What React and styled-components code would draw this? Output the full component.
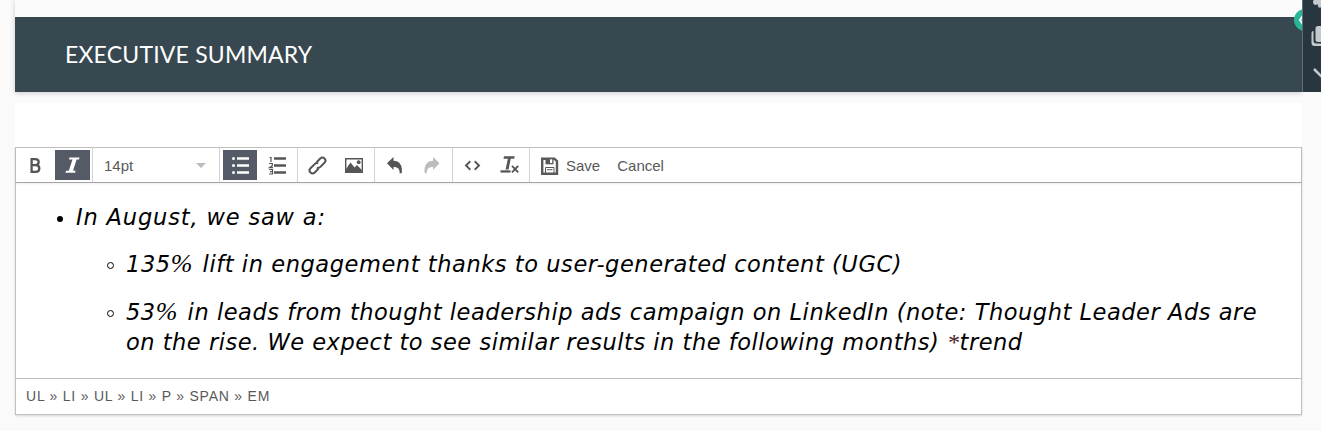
import React from "react";
import styled, { createGlobalStyle } from "styled-components";

const path = ["UL", "LI", "UL", "LI", "P", "SPAN", "EM"];

const BoldIcon = () => (
  <Icon>
    <path
      d="M5.600 4.100h3.600c2.500 0 3.500 1.200 3.500 2.900 0 1.900-1.100 3.100-3.500 3.100H5.600zM5.600 10.100h4c2.500 0 3.700 1.300 3.700 3.300 0 2.100-1.200 3.400-3.700 3.400H5.600z"
      fill="none"
      stroke="currentColor"
      strokeWidth="2.300"
    />
  </Icon>
);

const ItalicIcon = () => (
  <Icon>
    <path d="M6.500 2.500h10l-.5 2h-2.400L10 15.800h2.600l-.5 2H2.500l.5-2h2.800L9.500 4.500H6z" fill="currentColor" />
  </Icon>
);

const BulletIcon = () => (
  <Icon>
    <g fill="currentColor">
      <circle cx="3.500" cy="3.500" r="1.500" />
      <circle cx="3.500" cy="10.500" r="1.500" />
      <circle cx="3.500" cy="17.500" r="1.500" />
      <path d="M7 2.200h12v2.600H7zM7 9.200h12v2.600H7zM7 16.200h12v2.600H7z" />
    </g>
  </Icon>
);

const NumberIcon = () => (
  <Icon>
    <path d="M7 2.200h12v2.600H7zM7 9.200h12v2.600H7zM7 16.200h12v2.600H7z" fill="currentColor" />
    <path
      d="M2.500 2.500H4v4.500M2 8.500h3.300v2.200L2.500 12.700H6M2.200 14.500h3.300v2.200H3h2.500V19h-3.500"
      fill="none"
      stroke="currentColor"
      strokeWidth="1.200"
    />
  </Icon>
);

const LinkIcon = () => (
  <Icon>
    <g fill="none" stroke="currentColor" strokeWidth="2" transform="rotate(-45 10.500 10.500)">
      <path d="M12.500 9.500a3 3 0 0 0-3-2H3.600a3 3 0 0 0 0 6h5.200" />
      <path d="M8.500 11.500a3 3 0 0 0 3 2h5.900a3 3 0 0 0 0-6h-5.200" />
    </g>
  </Icon>
);

const ImageIcon = () => (
  <Icon>
    <path d="M1.700 3.700h16.600v13.600H1.700z" fill="none" stroke="currentColor" strokeWidth="1.400" />
    <path d="M2 17v-3l4.500-6.500 4 5L13 10l4.800 5v2z" fill="currentColor" />
    <circle cx="14.700" cy="7.200" r="1.900" fill="currentColor" />
  </Icon>
);

const UndoIcon = () => (
  <Icon>
    <path d="M2 8.300 8.500 2v3.800c5.800.2 9.300 4.200 8.300 12.100l-2.100.6c.1-4.500-1.700-6.500-6.200-6.500v3z" fill="currentColor" />
  </Icon>
);

const RedoIcon = () => (
  <Icon>
    <path d="M17.500 8.300 11 2v3.800C5.200 6 1.700 10 2.700 17.900l2.100.6c-.1-4.500 1.700-6.500 6.200-6.500v3z" fill="currentColor" />
  </Icon>
);

const CodeIcon = () => (
  <Icon>
    <path d="M7.300 6.300 3 10.500l4.300 4.200M11.700 6.300l4.300 4.200-4.300 4.200" fill="none" stroke="currentColor" strokeWidth="1.900" />
  </Icon>
);

const ClearIcon = () => (
  <Icon>
    <path d="M4 1.300h10.700l-.5 2.400h-3.500L8.500 14.500H5.600L7.900 3.700H3.500z" fill="currentColor" />
    <path d="M.5 15.300h10v2.300H.5z" fill="currentColor" />
    <path d="m12 10.800 6.200 6.500M18.200 10.800 12 17.300" stroke="currentColor" strokeWidth="1.900" />
  </Icon>
);

const SaveIcon = () => (
  <Icon>
    <path d="M2.200 2.700h12.200L17 5.200V17.800H2.200z" fill="none" stroke="currentColor" strokeWidth="2.400" />
    <path d="M5.500 2h8v6.300h-8z" fill="currentColor" />
    <path d="M10 3.300h2.200v3.700H10z" fill="#fff" />
    <path d="M5.500 18v-6.500h8.500V18" fill="none" stroke="currentColor" />
    <path d="M7 13.700h5.500" stroke="currentColor" />
  </Icon>
);

const App = () => {
  return (
    <Page>
      <GlobalStyle />
      <Top>
        <Report>
          <Title>EXECUTIVE SUMMARY</Title>
        </Report>
        <Dock>
          <DockIcons viewBox="0 0 18 92">
            <g fill="#c5cacd">
              <path d="M10 1c0 3 1 4 3 4l1.500-1 1 3.500H18V0h-7z" />
              <path d="M10.500 31a2 2 0 0 0-2 2v10a3 3 0 0 0 3 3H18v-2.500h-4.500a3 3 0 0 1-3-3z" />
              <path d="M15 26h3v16h-3a2.500 2.500 0 0 1-2.500-2.500v-11A2.500 2.500 0 0 1 15 26z" />
            </g>
            <path d="m11 69 8 8" stroke="#c5cacd" strokeWidth="2.500" />
          </DockIcons>
          <Badge viewBox="0 0 8 24">
            <circle cx="11" cy="12" r="11" fill="#2bb598" />
            <path d="M9 7.500 6 12l3 4.500" fill="none" stroke="#fff" strokeWidth="2" />
          </Badge>
        </Dock>
      </Top>

      <Panel>
        <Editor>
          <Toolbar>
            <Group $pad="2px" $gap="2px" $width="77px">
              <Tool $width="35px"><BoldIcon /></Tool>
              <Tool $width="35px" $active><ItalicIcon /></Tool>
            </Group>
            <Select>
              14pt
              <Caret />
            </Select>
            <Group>
              <Tool $active><BulletIcon /></Tool>
              <Tool><NumberIcon /></Tool>
            </Group>
            <Group $pad="2px" $width="77px">
              <Tool><LinkIcon /></Tool>
              <Tool><ImageIcon /></Tool>
            </Group>
            <Group>
              <Tool><UndoIcon /></Tool>
              <Tool $disabled><RedoIcon /></Tool>
            </Group>
            <Group $width="77px">
              <Tool><CodeIcon /></Tool>
              <Tool><ClearIcon /></Tool>
            </Group>
            <Action $left="10px"><SaveIcon />Save</Action>
            <Action $left="17px">Cancel</Action>
          </Toolbar>

          <Content>
            <Item>
              <Disc />
              <Line $spacing="0.85px">In August, we saw a:</Line>
            </Item>
            <Item $nested>
              <Circle />
              <Line $spacing="0.57px">
                135<Sign>%</Sign> lift in engagement thanks to user-generated content (UGC)
              </Line>
            </Item>
            <Item $nested $top="1px">
              <Circle />
              <div>
                <Line $spacing="0.54px">
                  53<Sign>%</Sign> in leads from thought leadership ads campaign on LinkedIn (note: Thought Leader Ads are
                </Line>
                <Line $spacing="0.52px">
                  on the rise. We expect to see similar results in the following months) <Star>*</Star>trend
                </Line>
              </div>
            </Item>
          </Content>

          <Status>{path.join(" » ")}</Status>
        </Editor>
      </Panel>
    </Page>
  );
};

export default App;

const GlobalStyle = createGlobalStyle`
  body {
    margin: 0;
    background-color: #fafafa;
    overflow: hidden;
  }

  * {
    box-sizing: border-box;
  }
`;

const Page = styled.div`
  height: 431px;
  padding-left: 15px;
  font-family: "Liberation Sans", Arial, sans-serif;
`;

const Top = styled.div`
  height: 92px;
  display: flex;
`;

const Report = styled.div`
  width: 1287px;
  padding-top: 17px;
  background-color: #fbfbfb;
  box-shadow: 0 1px 5px rgba(0, 0, 0, 0.2);
`;

const Title = styled.div`
  height: 75px;
  padding: 0 0 1px 50px;
  display: flex;
  align-items: center;
  background-color: #374851;
  color: white;
  font-family: Lato, sans-serif;
  font-size: 23px;
  letter-spacing: 0.2px;
`;

const Dock = styled.div`
  width: 19px;
  position: relative;
  background-color: #28363f;
  border-left: 1px solid #5f6d74;
`;

const DockIcons = styled.svg`
  width: 18px;
  height: 92px;
  display: block;
`;

const Badge = styled.svg`
  position: absolute;
  top: 8px;
  left: -9px;
  width: 8px;
  height: 24px;
`;

const Panel = styled.div`
  width: 1287px;
  margin-top: 11px;
  padding-top: 44px;
  background-color: white;
`;

const Editor = styled.div`
  height: 268px;
  border: 1px solid #c1c1c1;
  box-shadow: 0 1px 2px rgba(0, 0, 0, 0.15);
`;

const Toolbar = styled.div`
  height: 35px;
  display: flex;
  border-bottom: 1px solid #a6a6a6;
  box-shadow: 0 1px 2px rgba(0, 0, 0, 0.08);
`;

const Group = styled.div`
  width: ${(props) => props.$width || "78px"};
  padding: 2px 0 0 ${(props) => props.$pad || "3px"};
  display: flex;
  gap: ${(props) => props.$gap || "3px"};
  border-right: 1px solid #d3d3d3;
`;

const Tool = styled.div`
  width: ${(props) => props.$width || "34px"};
  height: 30px;
  display: flex;
  justify-content: center;
  align-items: center;
  color: ${(props) => (props.$active ? "white" : props.$disabled ? "#bdbdbd" : "#555")};
  background-color: ${(props) => (props.$active ? "#555b66" : "transparent")};
`;

const Icon = styled.svg.attrs({ viewBox: "0 0 20 20" })`
  width: 20px;
  height: 20px;
  flex-shrink: 0;
`;

const Select = styled.div`
  width: 127px;
  padding: 1px 13px 0 11px;
  display: flex;
  justify-content: space-between;
  align-items: center;
  border-right: 1px solid #d3d3d3;
  color: #595959;
  font-size: 15px;
`;

const Caret = styled.div`
  border: 5px solid transparent;
  border-top-color: #b9bdc2;
  border-bottom: 0;
`;

const Action = styled.div`
  height: 35px;
  margin-left: ${(props) => props.$left};
  display: flex;
  align-items: center;
  gap: 6px;
  color: #595959;
  font-size: 15px;
`;

const Content = styled.div`
  height: 195px;
  padding: 19px 0 0 40px;
  display: flex;
  flex-direction: column;
  gap: 17px;
  color: black;
  font-family: "DejaVu Sans", Verdana, sans-serif;
  font-size: 22.500px;
  font-style: italic;
  line-height: 30px;
`;

const Item = styled.div`
  margin-top: ${(props) => props.$top || "0px"};
  padding-left: ${(props) => (props.$nested ? "50px" : "0px")};
  display: flex;
`;

const Disc = styled.div`
  width: 6px;
  height: 6px;
  margin: 14px 13px 0 1px;
  border-radius: 50%;
  background-color: black;
`;

const Circle = styled.div`
  width: 7px;
  height: 7px;
  margin: 13px 12px 0 1px;
  border: 1px solid black;
  border-radius: 50%;
`;

const Line = styled.div`
  height: 30px;
  white-space: nowrap;
  letter-spacing: ${(props) => props.$spacing};
`;

const Sign = styled.span`
  margin-right: 2px;
  font-family: "Liberation Serif", serif;
  font-size: 26px;
  line-height: 1;
`;

const Star = styled.span`
  color: #4a2020;
  font-family: "Liberation Serif", serif;
  font-size: 24px;
  line-height: 1;
`;

const Status = styled.div`
  height: 36px;
  padding: 0 0 1px 10px;
  display: flex;
  align-items: center;
  border-top: 1px solid #c1c1c1;
  color: #595959;
  font-size: 14px;
  letter-spacing: 0.77px;
`;
